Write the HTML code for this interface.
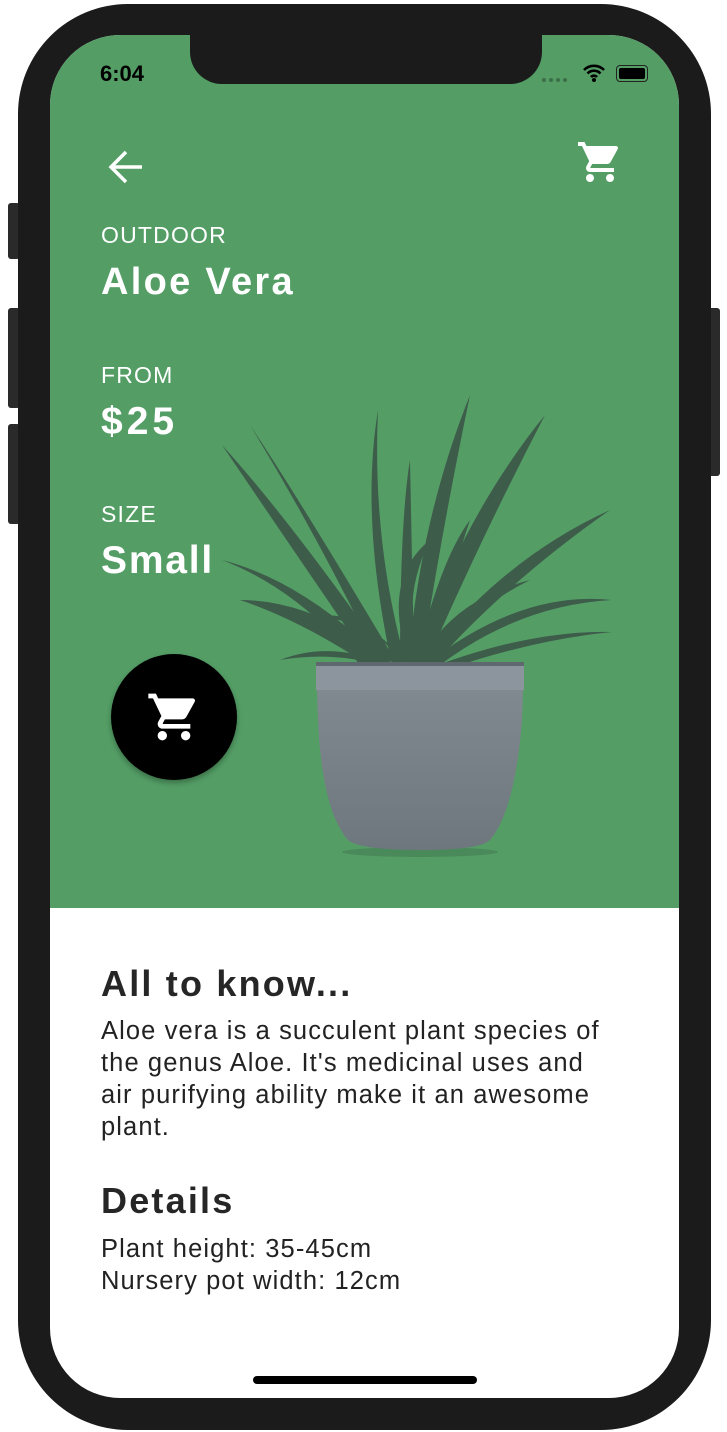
<!DOCTYPE html>
<html><head><style>
body{margin:0;width:727px;height:1432px;background:#fff;position:relative;overflow:hidden;font-family:"Liberation Sans",sans-serif}
.frame{position:absolute;left:18px;top:4px;width:693px;height:1426px;background:#1b1b1b;border-radius:110px}
.btn{position:absolute;background:#2a2a2a;border-radius:3px;width:12px}
.screen{position:absolute;left:50px;top:35px;width:629px;height:1363px;background:#fff;border-radius:70px;overflow:hidden}
.green{position:absolute;left:0;top:0;width:629px;height:873px;background:#549e66}
.notch{position:absolute;left:140px;top:-2px;width:352px;height:51px;background:#1b1b1b;border-radius:0 0 32px 32px}
.t{position:absolute;color:#fff;white-space:nowrap}
.d{position:absolute;color:#222;white-space:nowrap}
.h{font-size:36px;font-weight:bold;letter-spacing:2.2px;color:#262626}
.b{font-size:25.5px;letter-spacing:1.1px;line-height:32px}
</style></head><body>
<div class="btn" style="left:8px;top:203px;height:56px"></div>
<div class="btn" style="left:8px;top:308px;height:100px"></div>
<div class="btn" style="left:8px;top:424px;height:100px"></div>
<div class="btn" style="left:708px;top:308px;height:168px"></div>
<div class="frame"></div>
<div class="screen">
<div class="green"></div>
<div class="notch"></div>
<div class="t" style="left:50px;top:26px;font-size:22px;color:#000;font-weight:bold">6:04</div>
<div style="position:absolute;left:492px;top:43px;width:4px;height:4px;background:#3d6e48;border-radius:2px;box-shadow:7px 0 #3d6e48,14px 0 #3d6e48,21px 0 #3d6e48"></div>
<svg style="position:absolute;left:532px;top:28px" width="24" height="20" viewBox="0 0 24 20"><path d="M2 7a14 14 0 0 1 20 0M5.5 10.5a9 9 0 0 1 13 0M9 14a4 4 0 0 1 6 0" stroke="#000" stroke-width="2.6" fill="none"/><circle cx="12" cy="17" r="2" fill="#000"/></svg>
<div style="position:absolute;left:566px;top:30px;width:30px;height:15px;border:1.5px solid #222;border-radius:4px"></div>
<div style="position:absolute;left:569px;top:33px;width:26px;height:11px;background:#000;border-radius:2px"></div>
<svg style="position:absolute;left:56px;top:112px" width="40" height="40" viewBox="0 0 40 40"><path d="M36 20H6M20 5L5 20l15 15" stroke="#fff" stroke-width="3.5" fill="none"/></svg>
<svg style="position:absolute;left:526px;top:103px" width="48" height="48" viewBox="0 0 24 24"><path fill="#fff" d="M7 18c-1.1 0-2 .9-2 2s.9 2 2 2 2-.9 2-2-.9-2-2-2zM1 2v2h2l3.6 7.59-1.35 2.45c-.16.28-.25.61-.25.96 0 1.1.9 2 2 2h12v-2H7.42c-.14 0-.25-.11-.25-.25l.03-.12.9-1.63h7.45c.75 0 1.41-.41 1.75-1.03l3.58-6.49A1 1 0 0 0 20 4H5.21l-.94-2H1zm16 16c-1.1 0-2 .9-2 2s.9 2 2 2 2-.9 2-2-.9-2-2-2z"/></svg>
<div class="t" style="left:51px;top:187px;font-size:23px;letter-spacing:1.2px">OUTDOOR</div>
<div class="t" style="left:51px;top:226px;font-size:38px;font-weight:bold;letter-spacing:2.3px">Aloe Vera</div>
<div class="t" style="left:51px;top:327px;font-size:23px;letter-spacing:1.2px">FROM</div>
<div class="t" style="left:51px;top:365px;font-size:39px;font-weight:bold;letter-spacing:4px">$25</div>
<div class="t" style="left:51px;top:466px;font-size:23px;letter-spacing:1.2px">SIZE</div>
<div class="t" style="left:51px;top:504px;font-size:39px;font-weight:bold;letter-spacing:1.8px">Small</div>
<svg style="position:absolute;left:0;top:0" width="629" height="873" viewBox="50 35 629 873">
<g fill="#3e5c4a">
<path d="M372 665 Q300 560 222 445 Q290 520 388 660Z"/>
<path d="M380 665 Q320 540 250 425 Q300 500 395 660Z"/>
<path d="M360 665 Q300 590 222 560 Q300 580 378 655Z"/>
<path d="M368 665 Q300 620 240 600 Q310 600 385 655Z"/>
<path d="M392 665 Q360 520 378 410 Q372 540 405 660Z"/>
<path d="M400 665 Q400 520 410 460 Q412 560 414 660Z"/>
<path d="M408 665 Q420 520 470 395 Q440 540 422 660Z"/>
<path d="M412 665 Q460 520 545 415 Q480 540 428 660Z"/>
<path d="M415 665 Q440 560 470 520 Q450 580 430 660Z"/>
<path d="M420 665 Q500 560 610 510 Q510 580 436 662Z"/>
<path d="M425 665 Q520 590 612 600 Q520 605 440 665Z"/>
<path d="M430 668 Q530 630 612 632 Q530 640 440 672Z"/>
<path d="M402 665 Q360 600 300 620 Q370 610 410 668Z"/>
<path d="M418 665 Q450 600 530 580 Q460 615 432 668Z"/>
<path d="M390 665 Q330 640 280 660 Q340 650 395 670Z"/>
<path d="M410 665 Q380 580 430 540 Q400 600 420 665Z"/>
</g>
<defs><linearGradient id="pg" x1="0" y1="0" x2="0" y2="1"><stop offset="0" stop-color="#838b93"/><stop offset="1" stop-color="#6e767e"/></linearGradient></defs>
<ellipse cx="420" cy="852" rx="78" ry="5" fill="#4a8a5a"/>
<path d="M316 662 L524 662 L522 720 Q515 810 490 840 Q480 850 420 850 Q360 850 348 840 Q322 810 318 720Z" fill="url(#pg)"/>
<rect x="316" y="662" width="208" height="28" fill="#8c959d"/>
<rect x="316" y="662" width="208" height="4" fill="#60686f"/>
</svg>
<div style="position:absolute;left:61px;top:619px;width:126px;height:126px;border-radius:50%;background:#000;box-shadow:0 3px 6px rgba(0,0,0,.3)"></div>
<svg style="position:absolute;left:96px;top:654px" width="56" height="56" viewBox="0 0 24 24"><path fill="#fff" d="M7 18c-1.1 0-2 .9-2 2s.9 2 2 2 2-.9 2-2-.9-2-2-2zM1 2v2h2l3.6 7.59-1.35 2.45c-.16.28-.25.61-.25.96 0 1.1.9 2 2 2h12v-2H7.42c-.14 0-.25-.11-.25-.25l.03-.12.9-1.63h7.45c.75 0 1.41-.41 1.75-1.03l3.58-6.49A1 1 0 0 0 20 4H5.21l-.94-2H1zm16 16c-1.1 0-2 .9-2 2s.9 2 2 2 2-.9 2-2-.9-2-2-2z"/></svg>
<div class="d h" style="left:51px;top:928px">All to know...</div>
<div class="d b" style="left:51px;top:980px">Aloe vera is a succulent plant species of<br>the genus Aloe. It's medicinal uses and<br>air purifying ability make it an awesome<br>plant.</div>
<div class="d h" style="left:51px;top:1145px">Details</div>
<div class="d b" style="left:51px;top:1198px">Plant height: 35-45cm<br>Nursery pot width: 12cm</div>
<div style="position:absolute;left:203px;top:1341px;width:224px;height:8px;border-radius:4px;background:#000"></div>
</div>
</body></html>
